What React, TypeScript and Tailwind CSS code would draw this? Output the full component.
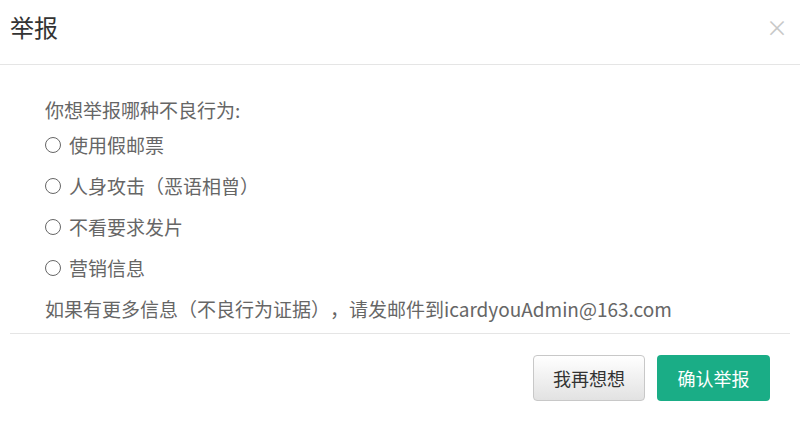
const OPTIONS = ["使用假邮票", "人身攻击（恶语相曾）", "不看要求发片", "营销信息"]

const FONT = "font-['Microsoft_YaHei','Noto_Sans_CJK_SC',sans-serif]"

export default function App() {
  return (
    <div className={`h-[434px] w-[800px] bg-white ${FONT} [text-spacing-trim:space-all]`}>
      <header className="flex h-[65px] items-start justify-between border-b border-[#e5e5e5] pl-[10px] pr-[12px] pt-[11px]">
        <h1 className="text-[24px] leading-[32px] text-[#333]">举报</h1>
        <button className="mt-[-1px] text-[22px] leading-[32px] text-[#c8c8c8]">×</button>
      </header>
      <div className="flex flex-col px-[45px] pt-[33px] text-[19px] leading-[24px] text-[#666]">
        <p>你想举报哪种不良行为:</p>
        <div className="mt-[11px] flex flex-col gap-[17px]">
          {OPTIONS.map((o) => (
            <label key={o} className="flex items-center gap-[8px]">
              <span className="h-[16px] w-[16px] rounded-full border border-[#666]" />
              <span>{o}</span>
            </label>
          ))}
          <p>如果有更多信息（不良行为证据），请发邮件到icardyouAdmin@163.com</p>
        </div>
      </div>
      <div className="mx-[10px] mt-[12px] border-t border-[#e5e5e5]" />
      <div className="flex justify-end gap-[12px] pr-[30px] pt-[21px]">
        <button className="h-[46px] w-[112px] rounded-[4px] border border-[#c8c8c8] bg-gradient-to-b from-white to-[#e2e2e2] text-[18px] text-[#333]">
          我再想想
        </button>
        <button className="h-[46px] w-[113px] rounded-[4px] bg-[#1aad86] text-[18px] text-white">确认举报</button>
      </div>
    </div>
  )
}
